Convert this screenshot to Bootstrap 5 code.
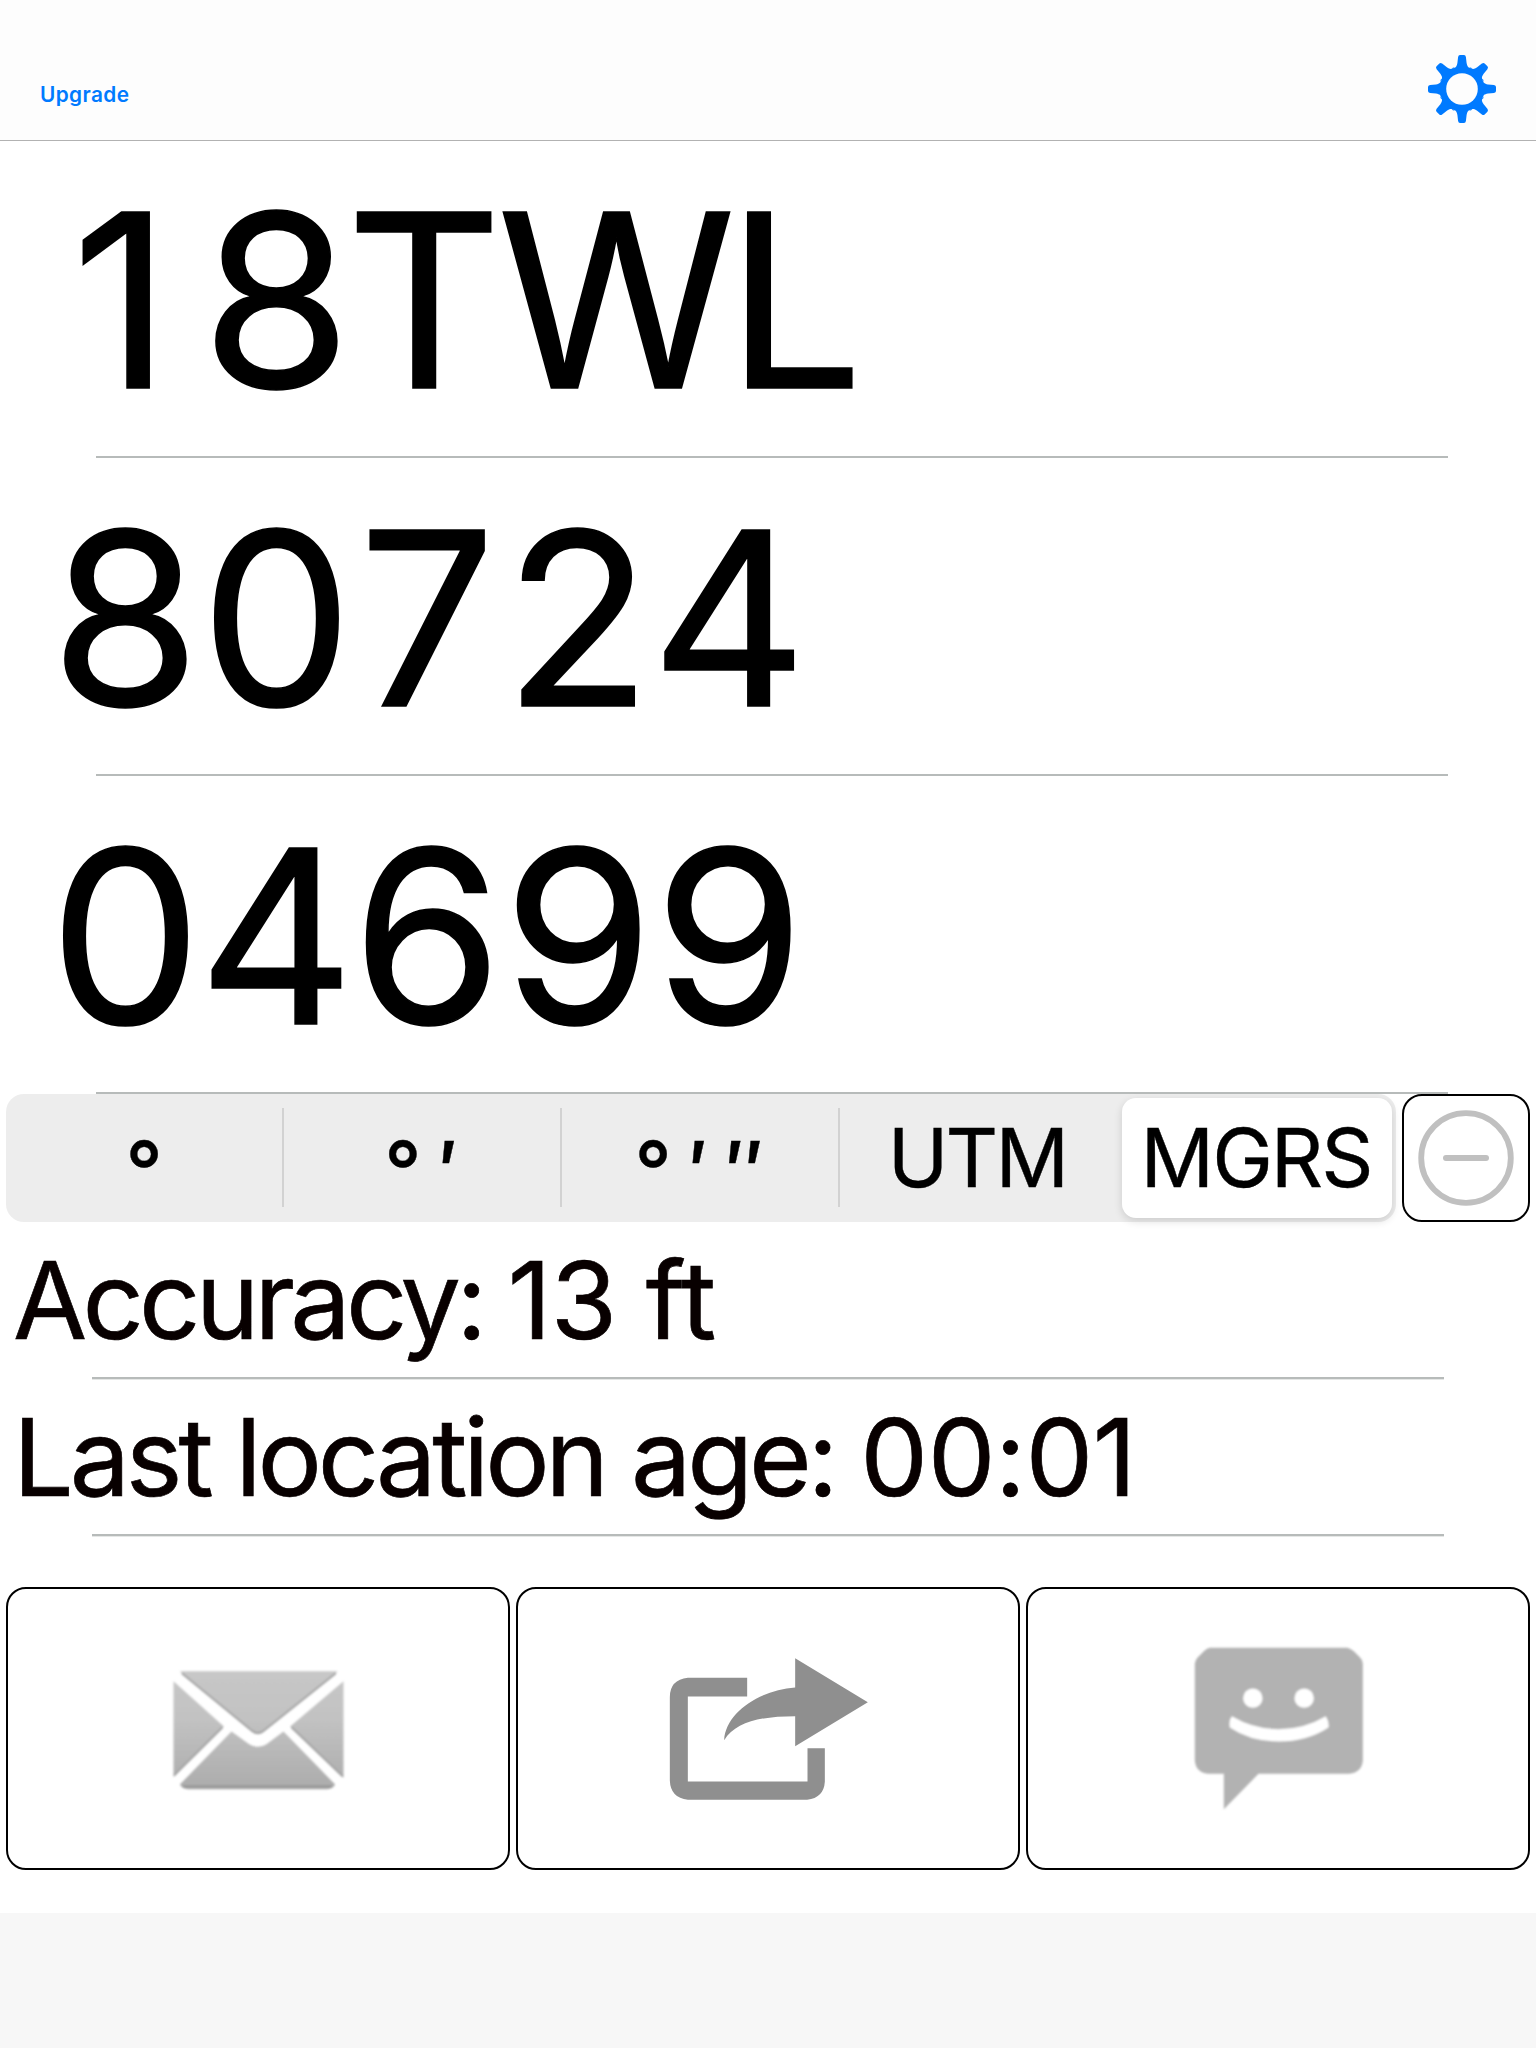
<!DOCTYPE html>
<html lang="en">
<head>
<meta charset="utf-8">
<meta name="viewport" content="width=device-width, initial-scale=1">
<title>Location</title>
<link rel="stylesheet" href="https://cdn.jsdelivr.net/npm/bootstrap@5.3.0/dist/css/bootstrap.min.css">
<style>
body{font-family:Inter,"Liberation Sans",sans-serif;color:#000;background:#fff;height:2048px;overflow:hidden}
.topbar{height:141px;background:#fdfdfd;border-bottom:1px solid #b2b2b2;padding:37px 38px 0 40px}
.upgrade{font-size:20.8px;font-weight:600;color:#007aff;letter-spacing:.4px;line-height:30px;margin-top:13px;text-decoration:none}
.gear{width:72px;height:72px}
.coord{height:318px;white-space:nowrap;font-size:242px;line-height:314px;padding:3px 0 0 47px;font-feature-settings:"tnum";letter-spacing:-6px;-webkit-text-stroke:1.6px #000}
.coord:first-child{height:317px;padding-top:2px}
.lead-one{display:inline-block;width:151px;font-feature-settings:normal;letter-spacing:0;padding-left:25px}
.k-eight{letter-spacing:-9px}
.k-t{letter-spacing:-5px}
.k-w{letter-spacing:-9px}
.ruled{position:relative}
.ruled::after{content:"";position:absolute;left:96px;width:1352px;bottom:0;height:2px;background:#b7bbba}
.info.ruled::after{left:92px;box-shadow:0 .6px 0 #d5d7d6}
.info{font-size:107.5px;height:157px;line-height:152px;padding:2px 0 0 13px;white-space:nowrap;color:#080000;letter-spacing:-4.75px;-webkit-text-stroke:.7px #080000}
.info.age{letter-spacing:-4.15px}
.reading{letter-spacing:-.8px}
.age .reading{letter-spacing:-.5px}
.controls{height:128px;padding:0 6px;gap:6px}
.segments{width:1390px;background:#ededed;border-radius:18px;position:relative}
.seg{width:278px;font-size:81.5px;line-height:128px;white-space:nowrap;border:0;background:none;padding:0 4px 0 0;color:#000;position:relative;letter-spacing:-2.8px;-webkit-text-stroke:.4px #000}
.seg.ruler{padding:13px 6px 0 0;font-weight:500;letter-spacing:-2.4px;height:128px}
.seg:first-child{padding-right:4px}
.seg.ruler::after{content:"";position:absolute;right:.5px;top:14px;height:99px;width:1.5px;background:#d2d2d2}
.seg.picked{width:270px;height:120px;line-height:120px;padding-right:2px;letter-spacing:-2.1px;background:#fff;border-radius:14px;box-shadow:0 3px 9px rgba(0,0,0,.14);margin:4px}
.zoomout{width:128px;border:2px solid #000;border-radius:20px;background:#fff;padding:0}
.actions{padding:51px 6px 0;gap:6px}
.act{height:283px;flex:1;border:2px solid #000;border-radius:20px;background:#fff;padding:0 1px 0 0}
.bottombar{background:#f7f7f7;height:135px}
</style>
<script src="https://cdn.jsdelivr.net/npm/bootstrap@5.3.0/dist/js/bootstrap.bundle.min.js"></script>
</head>
<body class="d-flex flex-column">
<header class="topbar d-flex justify-content-between align-items-center flex-shrink-0">
  <a class="upgrade" href="#">Upgrade</a>
  <svg class="gear" viewBox="-36 -36 72 72" fill="#007aff">
    <defs><path id="tooth" d="M-2 -34H2Q3.6 -34 3.9 -32L4.6 -26C5.2 -22.2 6.8 -20.6 9 -21.6L6 -14H-6L-9 -21.6C-6.8 -20.6 -5.2 -22.2 -4.6 -26L-3.9 -32Q-3.6 -34 -2 -34Z"/></defs>
    <circle r="18.8" fill="none" stroke="#007aff" stroke-width="6.2"/>
    <use href="#tooth"/><use href="#tooth" transform="rotate(45)"/><use href="#tooth" transform="rotate(90)"/><use href="#tooth" transform="rotate(135)"/><use href="#tooth" transform="rotate(180)"/><use href="#tooth" transform="rotate(225)"/><use href="#tooth" transform="rotate(270)"/><use href="#tooth" transform="rotate(315)"/>
    <circle r="15.8" fill="#fdfdfd"/>
  </svg>
</header>
<main class="flex-grow-1">
  <section>
    <div class="coord ruled"><span class="lead-one">1</span><span class="k-eight">8</span><span class="k-t">T</span><span class="k-w">W</span>L</div>
    <div class="coord ruled">80724</div>
    <div class="coord ruled">04699</div>
  </section>
  <div class="controls d-flex">
    <div class="segments d-flex">
      <button class="seg ruler">°</button>
      <button class="seg ruler">° ′</button>
      <button class="seg ruler">° ′ ″</button>
      <button class="seg">UTM</button>
      <button class="seg picked">MGRS</button>
    </div>
    <button class="zoomout d-flex justify-content-center align-items-center" aria-label="Less">
      <svg width="100" height="100" viewBox="-50 -50 100 100" fill="none" stroke="#c0c0c0"><circle r="44.8" stroke-width="5.8"/><path d="M-20 0H20" stroke-width="6" stroke-linecap="round"/></svg>
    </button>
  </div>
  <section>
    <div class="info ruled">Accuracy: <span class="reading">13 ft</span></div>
    <div class="info age ruled">Last location age: <span class="reading">00:01</span></div>
  </section>
  <div class="actions d-flex">
    <button class="act d-flex justify-content-center align-items-center" aria-label="Mail">
      <svg width="220" height="170" viewBox="-7.5 10.5 660 510">
        <defs>
          <linearGradient id="mg" gradientUnits="userSpaceOnUse" x1="0" y1="94" x2="0" y2="445"><stop offset="0" stop-color="#c7c7c7"/><stop offset=".4" stop-color="#c2c2c2"/><stop offset="1" stop-color="#acacac"/></linearGradient>
          <filter id="soft" x="-5%" y="-5%" width="110%" height="110%"><feGaussianBlur stdDeviation="2.5"/></filter>
        </defs>
        <g filter="url(#soft)">
        <path fill="url(#mg)" d="M88 92H562L338 274Q322 286 306 274Z"/>
        <path fill="url(#mg)" d="M69 122L220 258L69 410ZM579 122V412L419 258Z"/>
        <path fill="url(#mg)" d="M243 273L296 311Q322 327 348 311L399 273L554 432Q546 446 530 446H112Q96 446 88 432Z"/>
        <path fill="none" stroke="#a4a4a4" stroke-width="6" d="M94 98L306 272Q322 284 338 272L556 98M216 260L71 404M423 260L577 408"/>
        <path fill="none" stroke="#989898" stroke-width="7" d="M98 438H544"/>
        </g>
      </svg>
    </button>
    <button class="act d-flex justify-content-center align-items-center" aria-label="Share">
      <svg width="240" height="180" viewBox="-7.5 -4.5 720 540" fill="#8f8f8f">
        <path d="M290 112H112Q58 118 58 170V420Q60 472 112 478H470Q520 472 523 424V323H471V423H112V168H290Z"/>
        <path d="M434 53L652 185L434 317V227C330 227 255 245 221 299C225 215 330 148 434 141Z"/>
      </svg>
    </button>
    <button class="act d-flex justify-content-center align-items-center" aria-label="Message">
      <svg width="220" height="210" viewBox="-7.5 10.5 660 630">
        <g filter="url(#soft)">
        <path fill="#b2b2b2" d="M118 82H530Q540 84 550 92L568 110Q577 118 577 130V420Q574 456 536 460H264L160 566V460H112Q76 456 73 420V130Q74 118 82 110L100 92Q108 84 118 82Z"/>
        <circle cx="247" cy="233" r="29" fill="#fff"/><circle cx="401" cy="233" r="29" fill="#fff"/>
        <path fill="#fff" d="M184 287Q250 326 325 326T466 287Q477 305 474 321Q410 363 325 363T178 321Q174 300 184 287Z"/>
        </g>
      </svg>
    </button>
  </div>
</main>
<footer class="bottombar flex-shrink-0"></footer>
</body>
</html>
